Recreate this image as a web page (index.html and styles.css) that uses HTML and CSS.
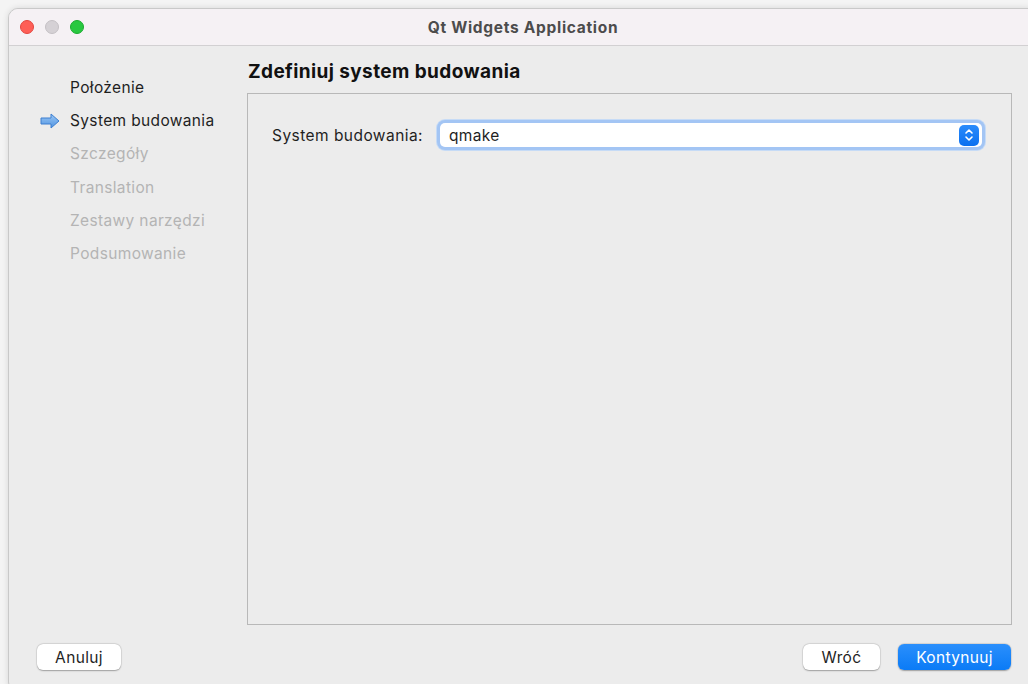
FILE: index.html
```html
<!DOCTYPE html>
<html lang="pl">
<head>
<meta charset="utf-8">
<title>Qt Widgets Application</title>
<link rel="stylesheet" href="styles.css">
</head>
<body>
<div class="window">
  <div class="titlebar">
    <div class="lights">
      <span class="light red"></span>
      <span class="light gray"></span>
      <span class="light green"></span>
    </div>
    <div class="title">Qt Widgets Application</div>
  </div>
  <div class="content">
    <div class="columns">
      <ul class="steps">
        <li class="step done">Położenie</li>
        <li class="step current">
          <svg class="arrow" width="20" height="16" viewBox="0 0 20 16">
            <defs>
              <linearGradient id="ag" x1="0" y1="0" x2="0" y2="1">
                <stop offset="0" stop-color="#9cc8f5"/>
                <stop offset="1" stop-color="#4f93e0"/>
              </linearGradient>
            </defs>
            <path d="M1 5 H11 V1 L19 8 L11 15 V11 H1 Z" fill="url(#ag)" stroke="#3d7fd0" stroke-width="1" stroke-linejoin="round"/>
          </svg>
          System budowania
        </li>
        <li class="step todo">Szczegóły</li>
        <li class="step todo">Translation</li>
        <li class="step todo">Zestawy narzędzi</li>
        <li class="step todo">Podsumowanie</li>
      </ul>
      <div class="page">
        <h1 class="heading">Zdefiniuj system budowania</h1>
        <div class="panel">
          <div class="field">
            <label class="label">System budowania:</label>
            <div class="combo">
              <span class="combo-value">qmake</span>
              <span class="stepper">
                <svg width="12" height="16" viewBox="0 0 12 16">
                  <path d="M3 6 L6 3 L9 6 M3 10 L6 13 L9 10" fill="none" stroke="#fff" stroke-width="1.6" stroke-linecap="round" stroke-linejoin="round"/>
                </svg>
              </span>
            </div>
          </div>
        </div>
      </div>
    </div>
    <div class="footer">
      <button class="btn">Anuluj</button>
      <div class="footer-right">
        <button class="btn">Wróć</button>
        <button class="btn primary">Kontynuuj</button>
      </div>
    </div>
  </div>
</div>
</body>
</html>
```
FILE: styles.css
```css
html, body {
  margin: 0;
  padding: 0;
}

body {
  width: 1028px;
  height: 684px;
  overflow: hidden;
  background: #f4f4f4;
  font-family: Inter, "Liberation Sans", sans-serif;
  color: #1e1e1e;
}

.window {
  margin: 8px 0 0 8px;
  width: 1030px;
  height: 684px;
  border: 1px solid #c9c9c9;
  border-radius: 10px;
  overflow: hidden;
  background: #ececec;
  box-shadow: 0 0 6px rgba(0, 0, 0, 0.12);
  display: flex;
  flex-direction: column;
  box-sizing: border-box;
}

.titlebar {
  height: 37px;
  flex: none;
  background: #f5f1f4;
  border-bottom: 1px solid #d2d0d2;
  box-sizing: border-box;
  display: flex;
  align-items: center;
  position: relative;
}

.lights {
  display: flex;
  gap: 11px;
  padding-left: 11px;
}

.light {
  width: 14px;
  height: 14px;
  border-radius: 50%;
  box-sizing: border-box;
}

.red { background: #fe5f57; border: 0.5px solid #e2463f; }
.gray { background: #d5d1d5; border: 0.5px solid #c4c0c4; }
.green { background: #28c840; border: 0.5px solid #1aab2e; }

.title {
  position: absolute;
  left: 0;
  right: 0;
  top: 0;
  bottom: 0;
  display: flex;
  align-items: center;
  justify-content: center;
  font-size: 15.5px;
  font-weight: 700;
  letter-spacing: 0.7px;
  color: #4c4c4c;
}

.content {
  flex: 1;
  display: flex;
  flex-direction: column;
}

.columns {
  display: flex;
}

.steps {
  list-style: none;
  margin: 0;
  padding: 24.5px 0 0 61px;
  width: 238px;
  box-sizing: border-box;
  flex: none;
}

.step {
  height: 33.4px;
  line-height: 33.4px;
  font-size: 15.5px;
  letter-spacing: 0.35px;
  position: relative;
  white-space: nowrap;
}

.done, .current { color: #1f1f1f; }
.todo { color: #b4b4b4; }

.arrow {
  position: absolute;
  left: -30px;
  top: 9px;
}

.page {
  flex: 1;
  padding-top: 15px;
}

.heading {
  margin: 0 0 10px 1px;
  font-size: 19px;
  font-weight: 700;
  line-height: 22px;
  color: #111;
  letter-spacing: 0.4px;
}

.panel {
  width: 765px;
  height: 532px;
  box-sizing: border-box;
  border: 1px solid #b8b8b8;
  padding: 25px 0 0 24px;
}

.field {
  display: flex;
  align-items: center;
  gap: 17px;
}

.label {
  font-size: 15.5px;
  letter-spacing: 0.45px;
  color: #1f1f1f;
}

.combo {
  width: 542px;
  height: 24px;
  background: #fff;
  border-radius: 5px;
  box-shadow: 0 0 0 3px #a3c5f4, 0 0 0 4px #c6dbf6;
  display: flex;
  align-items: center;
  justify-content: space-between;
  padding: 0 3px 0 9px;
  box-sizing: border-box;
  margin: 4px 0;
}

.combo-value {
  font-size: 15.5px;
  letter-spacing: 0.35px;
  color: #1f1f1f;
}

.stepper {
  width: 20px;
  height: 21px;
  border-radius: 5px;
  background: linear-gradient(#2a8bfb, #0a70f0);
  display: flex;
  align-items: center;
  justify-content: center;
}

.footer {
  display: flex;
  justify-content: space-between;
  align-items: center;
  padding: 19px 28px 0 28px;
  width: 1030px;
  box-sizing: border-box;
}

.footer-right {
  display: flex;
  gap: 18px;
}

.btn {
  height: 26px;
  border: none;
  border-radius: 6px;
  background: #fff;
  box-shadow: 0 0.5px 1.5px rgba(0, 0, 0, 0.3), 0 0 0 0.5px rgba(0, 0, 0, 0.08);
  font-family: Inter, "Liberation Sans", sans-serif;
  font-size: 15.5px;
  letter-spacing: 0.35px;
  color: #1f1f1f;
  padding: 0;
  width: 84px;
}

.footer-right .btn {
  width: 77px;
}

.footer-right .btn.primary {
  width: 113px;
  background: linear-gradient(#2a8ffc, #0b7bf6);
  color: #fff;
}
```
